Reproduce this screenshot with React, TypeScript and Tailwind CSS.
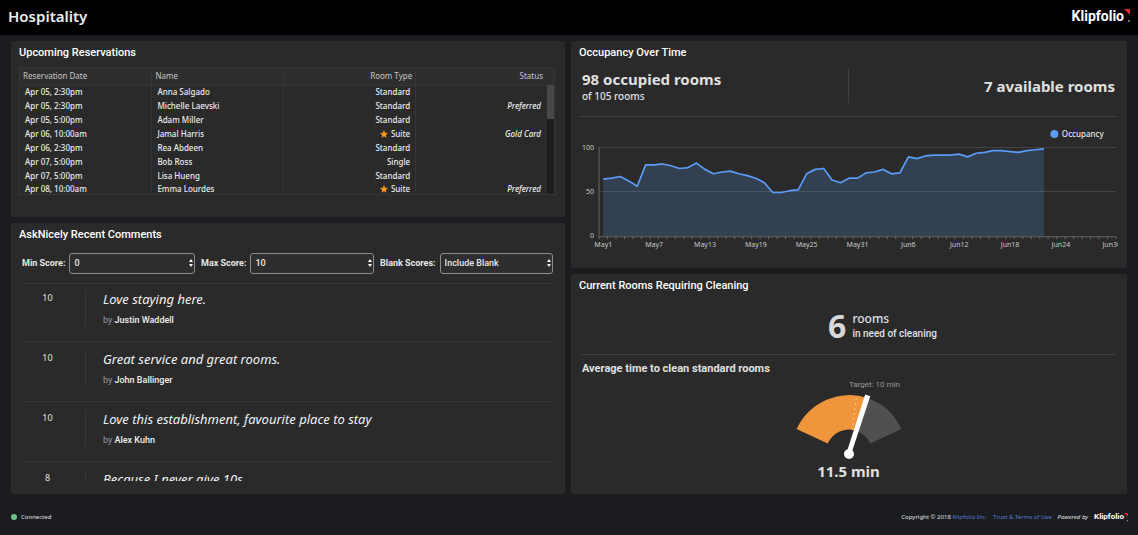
import type { ReactNode } from "react";

type Reservation = { date: string; name: string; room: string; status?: string };

const reservations: Reservation[] = [
  { date: "Apr 05, 2:30pm", name: "Anna Salgado", room: "Standard" },
  { date: "Apr 05, 2:30pm", name: "Michelle Laevski", room: "Standard", status: "Preferred" },
  { date: "Apr 05, 5:00pm", name: "Adam Miller", room: "Standard" },
  { date: "Apr 06, 10:00am", name: "Jamal Harris", room: "Suite", status: "Gold Card" },
  { date: "Apr 06, 2:30pm", name: "Rea Abdeen", room: "Standard" },
  { date: "Apr 07, 5:00pm", name: "Bob Ross", room: "Single" },
  { date: "Apr 07, 5:00pm", name: "Lisa Hueng", room: "Standard" },
  { date: "Apr 08, 10:00am", name: "Emma Lourdes", room: "Suite", status: "Preferred" },
];

const comments = [
  { score: 10, quote: "Love staying here.", author: "Justin Waddell" },
  { score: 10, quote: "Great service and great rooms.", author: "John Ballinger" },
  { score: 10, quote: "Love this establishment, favourite place to stay", author: "Alex Kuhn" },
  { score: 8, quote: "Because I never give 10s" },
];

const occupancy = [
  64, 65, 67, 62, 56, 80, 80, 81, 79, 76, 77, 82, 75, 70, 72, 73, 70, 68, 65, 60, 49, 49, 51, 52, 70, 75, 76, 63,
  60, 65, 65, 71, 72, 75, 70, 71, 89, 87, 90, 91, 91, 91, 92, 89, 93, 94, 96, 96, 95, 94, 96, 97, 98,
];

const dayLabels = ["May1", "May7", "May13", "May19", "May25", "May31", "Jun6", "Jun12", "Jun18", "Jun24", "Jun30"];

function Panel({ title, className, children }: { title: string; className: string; children: ReactNode }) {
  return (
    <section className={`rounded-[2px] bg-[#2a2a2a] pl-2 ${className}`}>
      <h2 className="font-['Roboto',sans-serif] text-[11px] leading-4 font-medium text-white">{title}</h2>
      {children}
    </section>
  );
}

function Star() {
  return (
    <svg viewBox="0 0 10 10" className="mr-[3px] inline-block size-2 align-[-1px]" aria-hidden="true">
      <path
        d="M5 0 6.5 3.3 10 3.7 7.4 6.1 8.1 9.7 5 7.9 1.9 9.7 2.6 6.1 0 3.7 3.5 3.3Z"
        fill="#f7941e"
      />
    </svg>
  );
}

function Logo({ small = false }: { small?: boolean }) {
  return (
    <span className="flex items-center text-white">
      <span
        className={
          small
            ? "font-['Roboto',sans-serif] text-[8px] leading-3 font-bold"
            : "font-['Roboto',sans-serif] text-[14px] leading-5 font-bold"
        }
      >
        Klipfolio
      </span>
      <svg viewBox="0 0 6 14" className={small ? "h-[9px] w-1" : "h-[14px] w-[6px]"} aria-hidden="true">
        <path d="M0 0H6V6Z" fill="#ff1f35" />
        <circle cx="5" cy="12" r="0.8" fill="#fff" />
      </svg>
    </span>
  );
}

function Field({ id, label, value, className }: { id: string; label: string; value: string; className: string }) {
  return (
    <div className={`flex min-w-0 items-center gap-1 ${className}`}>
      <label htmlFor={id} className="text-[9px] font-bold whitespace-nowrap text-[#e6e6e6]">
        {label}
      </label>
      <div className="relative min-w-0 flex-1">
        <select
          id={id}
          defaultValue={value}
          className="block h-[21px] w-full appearance-none rounded-[3px] border border-[#8c8c8c] bg-[#2e2e2e] pl-1 text-[9px] font-medium text-[#e6e6e6]"
        >
          <option>{value}</option>
        </select>
        <svg
          viewBox="0 0 4 8"
          className="pointer-events-none absolute top-[6px] right-[2px] h-2 w-1"
          fill="#fff"
          aria-hidden="true"
        >
          <path d="M2 0 4 3H0ZM2 8 0 5H4Z" />
        </svg>
      </div>
    </div>
  );
}

function Reservations() {
  const cell = "border-r border-[#363636]";
  return (
    <div className="relative mt-[6px] mr-[10px] h-[128px] overflow-hidden border border-[#363636]">
      <table className="w-full table-fixed border-collapse text-[8px]">
        <colgroup>
          <col className="w-[24.7%]" />
          <col className="w-[24.7%]" />
          <col className="w-[24.7%]" />
          <col />
        </colgroup>
        <thead>
          <tr className="h-[17px] border-b border-[#363636] bg-[#2e2e2e] leading-[14px] text-[#c4c4c4]">
            <th className={`${cell} pl-[3px] text-left font-normal`}>Reservation Date</th>
            <th className={`${cell} pl-[3px] text-left font-normal`}>Name</th>
            <th className={`${cell} pr-[3px] text-right font-normal`}>Room Type</th>
            <th className="pr-[11px] text-right font-normal">Status</th>
          </tr>
        </thead>
        <tbody className="text-[#ececec]">
          {reservations.map((r, i) => (
            <tr key={i} className="h-[14px] leading-[12px] last:h-3">
              <td className={`${cell} pl-[5px] font-medium`}>{r.date}</td>
              <td className={`${cell} pl-[5px] font-medium`}>{r.name}</td>
              <td className={`${cell} pr-[5px] text-right font-medium`}>
                {r.room === "Suite" && <Star />}
                {r.room}
              </td>
              <td className="pr-[13px] text-right font-medium italic">{r.status}</td>
            </tr>
          ))}
        </tbody>
      </table>
      <div className="absolute top-[17px] right-0 bottom-0 w-[7px] bg-[#1d1d1d]">
        <div className="h-[34px] bg-[#484848]" />
      </div>
    </div>
  );
}

function OccupancyChart() {
  const left = 20;
  const right = 536;
  const base = 110;
  const step = (right - left) / 61;
  const x = (i: number) => left + step * (i + 0.5);
  const y = (v: number) => base - v * 0.89;
  const line = occupancy.map((v, i) => `${x(i).toFixed(1)},${y(v).toFixed(1)}`).join(" ");
  const ticks = Array.from({ length: 62 }, (_, i) => `M${(left + step * i).toFixed(1)} ${base}v3`).join("");
  return (
    <svg viewBox="0 0 538 124" className="block w-full" role="img" aria-label="Occupancy">
      <g stroke="#444" strokeWidth="1">
        <path d={`M${left} 21.5H${right}`} />
        <path d={`M${left} 65.5H${right}`} />
      </g>
      <polygon points={`${x(0)},${base} ${line} ${x(occupancy.length - 1)},${base}`} fill="#5a9bf6" fillOpacity="0.2" />
      <path d={`M${left} 21V${base}.5H${right}`} stroke="#666" fill="none" />
      <path d={ticks} stroke="#666" fill="none" />
      <polyline points={line} fill="none" stroke="#5a9bf6" strokeWidth="1.7" strokeLinejoin="round" />
      <g fill="#c8c8c8" fontSize="7">
        <text x="15" y="24" textAnchor="end">100</text>
        <text x="15" y="68" textAnchor="end">50</text>
        <text x="15" y="112" textAnchor="end">0</text>
        {dayLabels.map((d, i) => (
          <text key={d} x={x(i * 6)} y="121" textAnchor="middle">
            {d}
          </text>
        ))}
      </g>
      <circle cx="474.5" cy="8" r="4" fill="#5a9bf6" />
      <text x="482" y="11" fontSize="8" fontWeight="500" fill="#e6e6e6">
        Occupancy
      </text>
    </svg>
  );
}

function Gauge() {
  return (
    <svg
      viewBox="0 0 120 68"
      className="mt-[2px] h-[68px] w-[120px]"
      role="img"
      aria-label="11.5 minutes, target 10 minutes"
    >
      <path d="M7.6 37A58 58 0 0 1 78.5 6L67.5 38.5A23.6 23.6 0 0 0 38.7 51.6Z" fill="#ef963c" />
      <path d="M78 6A58 58 0 0 1 112.4 37L81.3 51.6A23.6 23.6 0 0 0 67.2 39Z" fill="#505050" />
      <path d="M63.3 38 67.5 4" stroke="#ffc988" strokeWidth="1" strokeDasharray="2 3" />
      <path d="M57.8 60 76.2 2.5 81.2 4.2 62.2 62Z" fill="#fff" />
      <circle cx="60" cy="62" r="5" fill="#fff" />
    </svg>
  );
}

export default function App() {
  return (
    <div className="flex min-h-screen flex-col bg-[#1b1c20] font-['Noto_Sans',sans-serif] text-[#e0e0e0]">
      <header className="flex h-[35px] items-center justify-between bg-black px-2 pb-[3px]">
        <h1 className="text-[15px] leading-5 font-semibold text-[#ececec]">Hospitality</h1>
        <Logo />
      </header>

      <main className="grid grid-cols-[minmax(0,554fr)_minmax(0,556fr)] gap-[6px] px-[11px] pt-[6px]">
        <div className="flex flex-col gap-[6px]">
          <Panel title="Upcoming Reservations" className="pt-1 pb-[22px]">
            <Reservations />
          </Panel>

          <Panel title="AskNicely Recent Comments" className="flex-1 pt-1 pb-[13px]">
            <form className="mt-[10px] mr-3 ml-[3px] flex gap-[6px] font-['Roboto',sans-serif]">
              <Field id="min-score" label="Min Score:" value="0" className="w-[173px] flex-auto" />
              <Field id="max-score" label="Max Score:" value="10" className="w-[173px] flex-auto" />
              <Field id="blank-scores" label="Blank Scores:" value="Include Blank" className="w-[173px] flex-auto" />
            </form>
            <ul className="mt-[9px] mr-3 ml-[3px] h-[198px] overflow-hidden">
              {comments.map((c) => (
                <li
                  key={c.quote}
                  className="flex h-[60px] border-t border-[#353535] pt-[9px] first:h-[58px] first:pt-[7px]"
                >
                  <div className="w-[63px] pr-3 text-center text-[9px] leading-[14px] text-[#e0e0e0]">{c.score}</div>
                  <div className="h-9 border-l border-[#383838] pl-[17px]">
                    <p className="text-[13px] leading-4 text-[#f2f2f2] italic">{c.quote}</p>
                    {c.author && (
                      <p className="mt-[7px] font-['Roboto',sans-serif] text-[9px] leading-3 font-medium text-[#f0f0f0]">
                        <span className="font-normal text-[#9a9a9a]">by</span> {c.author}
                      </p>
                    )}
                  </div>
                </li>
              ))}
            </ul>
          </Panel>
        </div>

        <div className="flex flex-col gap-[6px]">
          <Panel title="Occupancy Over Time" className="pt-1 pb-[18px]">
            <div className="mt-2 mr-[9px] flex justify-between border-b border-[#404040] pr-[3px] pb-[13px] pl-[3px]">
              <div className="flex-1">
                <p className="text-[15px] leading-5 font-bold">98 occupied rooms</p>
                <p className="text-[10px] leading-[14px] font-medium">of 105 rooms</p>
              </div>
              <div className="flex flex-1 items-center justify-end border-l border-[#404040]">
                <p className="text-[15px] leading-5 font-bold">7 available rooms</p>
              </div>
            </div>
            <div className="mt-[9px] mr-[9px]">
              <OccupancyChart />
            </div>
          </Panel>

          <Panel title="Current Rooms Requiring Cleaning" className="flex-1 pt-1 pb-3">
            <div className="mr-3 ml-[3px] flex items-center justify-center gap-[6px] border-b border-[#404040] pt-3 pb-[8px] pl-[68px]">
              <span className="text-[32px] leading-10 font-bold text-[#d8d8d8]">6</span>
              <div>
                <p className="text-[12px] leading-4 font-medium">rooms</p>
                <p className="font-['Roboto',sans-serif] text-[10px] leading-[14px] font-medium">in need of cleaning</p>
              </div>
            </div>
            <h3 className="mt-[6px] ml-[3px] font-['Roboto',sans-serif] text-[11px] leading-4 font-bold">
              Average time to clean standard rooms
            </h3>
            <div className="mr-[9px] flex flex-col items-center">
              <p className="mt-[3px] ml-[52px] font-['Roboto',sans-serif] text-[8px] leading-[10px] text-[#999]">
                Target: 10 min
              </p>
              <Gauge />
              <p className="mt-px text-[15px] leading-5 font-bold">11.5 min</p>
            </div>
          </Panel>
        </div>
      </main>

      <footer className="flex items-center justify-between pt-[17px] pr-[10px] pb-[11px] pl-[11px] text-[6px] leading-3">
        <div className="flex items-center gap-1">
          <span className="size-[6px] rounded-full bg-[#6cc286]" />
          Connected
        </div>
        <div className="flex items-center gap-[6px]">
          <span>
            Copyright © 2018{" "}
            <a href="#klipfolio" className="text-[#5577cf]">
              Klipfolio Inc.
            </a>
          </span>
          <a href="#terms" className="text-[#5577cf]">
            Trust &amp; Terms of Use
          </a>
          <span className="italic">Powered by</span>
          <Logo small />
        </div>
      </footer>
    </div>
  );
}
